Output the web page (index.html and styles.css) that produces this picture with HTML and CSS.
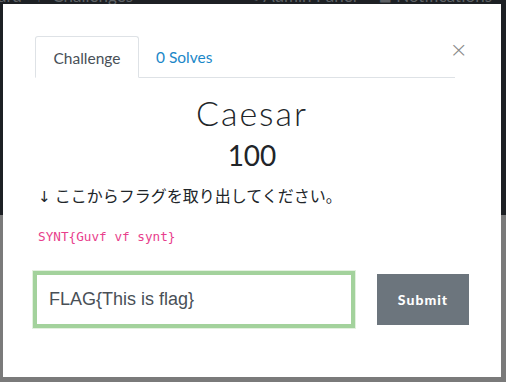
FILE: index.html
```html
<!DOCTYPE html>
<html>
<head>
<meta charset="utf-8">
<link rel="stylesheet" href="styles.css">
</head>
<body>
<div class="page">
  <div class="navbar">
    <span class="nav-item nav-first">ard</span>
    <span class="nav-item nav-ch"><span class="nav-ico">⚑</span> Challenges</span>
    <span class="nav-spacer"></span>
    <span class="nav-item"><span class="nav-ico">✎</span> Admin Panel</span>
    <span class="nav-item nav-last"><span class="nav-ico">■</span> Notifications</span>
  </div>
  <div class="content-bg"></div>
</div>
<div class="modal">
  <div class="modal-top">
    <div class="tabs">
      <div class="tab active">Challenge</div>
      <div class="tab link">0 Solves</div>
    </div>
    <div class="close">×</div>
  </div>
  <h2 class="title">Caesar</h2>
  <h3 class="value">100</h3>
  <p class="desc"><span class="arrow">↓</span> ここからフラグを取り出してください。</p>
  <code class="code">SYNT{Guvf vf synt}</code>
  <div class="form">
    <div class="input-wrap"><div class="input">FLAG{This is flag}</div></div>
    <button class="submit">Submit</button>
  </div>
</div>
</body>
</html>
```
FILE: styles.css
```css
html, body {
  margin: 0;
  padding: 0;
}
body {
  width: 506px;
  height: 382px;
  overflow: hidden;
  background: #7a7a7a;
  font-family: "Lato", "Noto Sans CJK JP", sans-serif;
  position: relative;
}
.page {
  display: flex;
  flex-direction: column;
  height: 100%;
}
.navbar {
  background: #1d2024;
  height: 215px;
  display: flex;
  align-items: flex-start;
  color: #5e6266;
  font-size: 17px;
  line-height: 20px;
}
.navbar .nav-item {
  margin-top: -14px;
  white-space: nowrap;
}
.nav-first { margin-left: -2px; }
.nav-ch { margin-left: 14px; }
.nav-spacer { flex: 1; }
.nav-last { margin-left: 22px; margin-right: 14px; }
.nav-ico { font-size: 13px; }
.content-bg {
  flex: 1;
  background: #7a7a7a;
}
.modal {
  position: absolute;
  left: 3px;
  top: 4px;
  width: 498px;
  height: 373px;
  background: #fff;
  box-sizing: border-box;
  padding: 32px 32px 0 32px;
  color: #212529;
}
.modal-top {
  display: flex;
  align-items: flex-start;
  position: relative;
}
.tabs {
  flex: 1;
  display: flex;
  border-bottom: 1px solid #dee2e6;
  margin-right: 14px;
  height: 41px;
}
.tab {
  font-size: 15.5px;
  padding: 0 16px 0 17px;
  height: 41px;
  line-height: 42px;
  box-sizing: border-box;
}
.tab.active {
  border: 1px solid #dee2e6;
  border-bottom-color: #fff;
  border-radius: 3px 3px 0 0;
  color: #495057;
  height: 42px;
  background: #fff;
  width: 104px;
  padding: 0;
  text-align: center;
}
.tab.link {
  color: #1b87c8;
}
.close {
  position: absolute;
  right: 1px;
  top: 3px;
  font-size: 22px;
  line-height: 22px;
  color: #8a8a8a;
  font-family: "DejaVu Sans", sans-serif;
  font-weight: 300;
}
.title {
  margin: 15px 0 0 0;
  text-align: center;
  font-weight: 300;
  font-size: 34px;
  letter-spacing: 2px;
  line-height: 40px;
  color: #212529;
}
.value {
  margin: 5px 0 0 0;
  text-align: center;
  font-weight: 400;
  font-size: 28px;
  line-height: 34px;
  color: #212529;
}
.desc {
  margin: 12px 0 0 3px;
  font-size: 16px;
  line-height: 24px;
  color: #212529;
}
.arrow {
  color: #212529;
  font-family: "DejaVu Sans", sans-serif;
  font-size: 15px;
}
.code {
  display: block;
  margin: 19px 0 0 3px;
  font-family: "DejaVu Sans Mono", monospace;
  font-size: 12.7px;
  line-height: 18px;
  color: #e83e8c;
}
.form {
  display: flex;
  align-items: center;
  margin: 24px 0 0 -3px;
  gap: 21px;
}
.input-wrap {
  width: 324px;
  height: 59px;
  flex: none;
  box-sizing: border-box;
  border: 1px solid #e3f1df;
}
.input {
  height: 100%;
  box-sizing: border-box;
  border: 4px solid #a3d29c;
  font-family: "Liberation Sans", Arial, sans-serif;
  font-size: 18px;
  color: #495057;
  padding-left: 12px;
  line-height: 49px;
}
.submit {
  width: 92px;
  height: 51px;
  flex: none;
  border: none;
  border-radius: 0;
  background: #6c757d;
  color: #fff;
  font-family: "Lato", sans-serif;
  font-weight: 900;
  font-size: 14px;
  letter-spacing: 1px;
  padding: 0;
}
```
